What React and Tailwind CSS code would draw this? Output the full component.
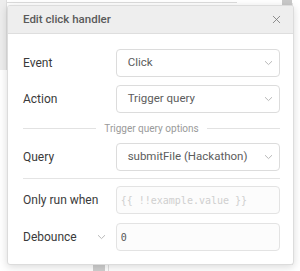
import { X } from "lucide-react";

function Chevron({ className = "" }) {
  return (
    <svg width="9" height="6" viewBox="0 0 9 6" className={className} fill="none">
      <path d="M1 1.2 4.5 4.6 8 1.2" stroke="#b8b8b8" strokeWidth="1" />
    </svg>
  );
}

function Select({ value }) {
  return (
    <div className="flex h-[28px] w-[165px] items-center justify-between rounded-[4px] border border-[#dcdcdc] bg-white pl-[11px] pr-[6px] text-[11.5px] text-[#5c5c5c]">
      <span>{value}</span>
      <Chevron />
    </div>
  );
}

function Row({ label, children, extra }) {
  return (
    <div className="flex items-center">
      <div className="flex w-[93px] items-center justify-between pr-[10px] text-[12px] text-[#3a3a3a]">
        <span>{label}</span>
        {extra}
      </div>
      {children}
    </div>
  );
}

function CodeInput({ value, placeholder }) {
  return (
    <div className="flex h-[28px] w-[165px] items-center rounded-[4px] border border-[#e3e3e3] bg-[#fcfcfc] pl-[4px] font-['DejaVu_Sans_Mono',monospace] text-[10px]">
      {value ? <span className="text-[#555]">{value}</span> : <span className="text-[#cfcfcf]">{placeholder}</span>}
    </div>
  );
}

export default function App() {
  return (
    <div className="relative h-[271px] w-[300px] overflow-hidden bg-white font-['Roboto',sans-serif]">
      {/* app behind the modal */}
      <div className="flex h-full">
        <div className="h-[70px] w-[7px] border-r border-[#dedede] bg-[#ededed]" />
        <div className="flex flex-1 flex-col">
          <div className="h-[3px] w-[230px] border-b border-[#dcdcdc]" />
          <div className="flex flex-1 justify-end">
            <div className="w-[8px] border-l border-[#e5e5e5] bg-white" />
          </div>
          <div className="flex h-[6px] pl-[86px]">
            <div className="w-[12px] bg-[#cfcfcf]" />
            <div className="ml-[3px] w-[130px] border-l border-[#e0e0e0]" />
          </div>
        </div>
      </div>
      <div className="absolute right-[8px] top-0 h-[10px] w-[10px] bg-[#c9c9c9]" />

      {/* modal */}
      <div className="absolute left-[7px] top-[5px] flex h-[260px] w-[287px] flex-col overflow-hidden rounded-[3px] border border-[#dcdcdc] bg-white shadow-[0_2px_8px_rgba(0,0,0,0.15)]">
        <div className="flex h-[28px] shrink-0 items-center justify-between border-b border-[#dedede] bg-[#eeeeee] pl-[15px] pr-[10px]">
          <span className="text-[11.5px] font-medium text-[#5a5a5a]">Edit click handler</span>
          <X size={13} strokeWidth={1.5} color="#777" />
        </div>
        <div className="flex flex-col pl-[15px] pr-[13px] pt-[15px]">
          <Row label="Event">
            <Select value="Click" />
          </Row>
          <div className="h-[8px]" />
          <Row label="Action">
            <Select value="Trigger query" />
          </Row>
          <div className="flex h-[30px] items-center gap-[8px]">
            <div className="h-px flex-1 bg-[#e2e2e2]" />
            <span className="text-[10px] text-[#9a9a9a]">Trigger query options</span>
            <div className="h-px flex-1 bg-[#e2e2e2]" />
          </div>
          <Row label="Query">
            <Select value="submitFile (Hackathon)" />
          </Row>
          <div className="mb-[7px] mt-[7px] h-px bg-[#e4e4e4]" />
          <Row label="Only run when">
            <CodeInput placeholder="{{ !!example.value }}" />
          </Row>
          <div className="h-[9px]" />
          <Row label="Debounce" extra={<Chevron />}>
            <CodeInput value="0" />
          </Row>
        </div>
      </div>
    </div>
  );
}
